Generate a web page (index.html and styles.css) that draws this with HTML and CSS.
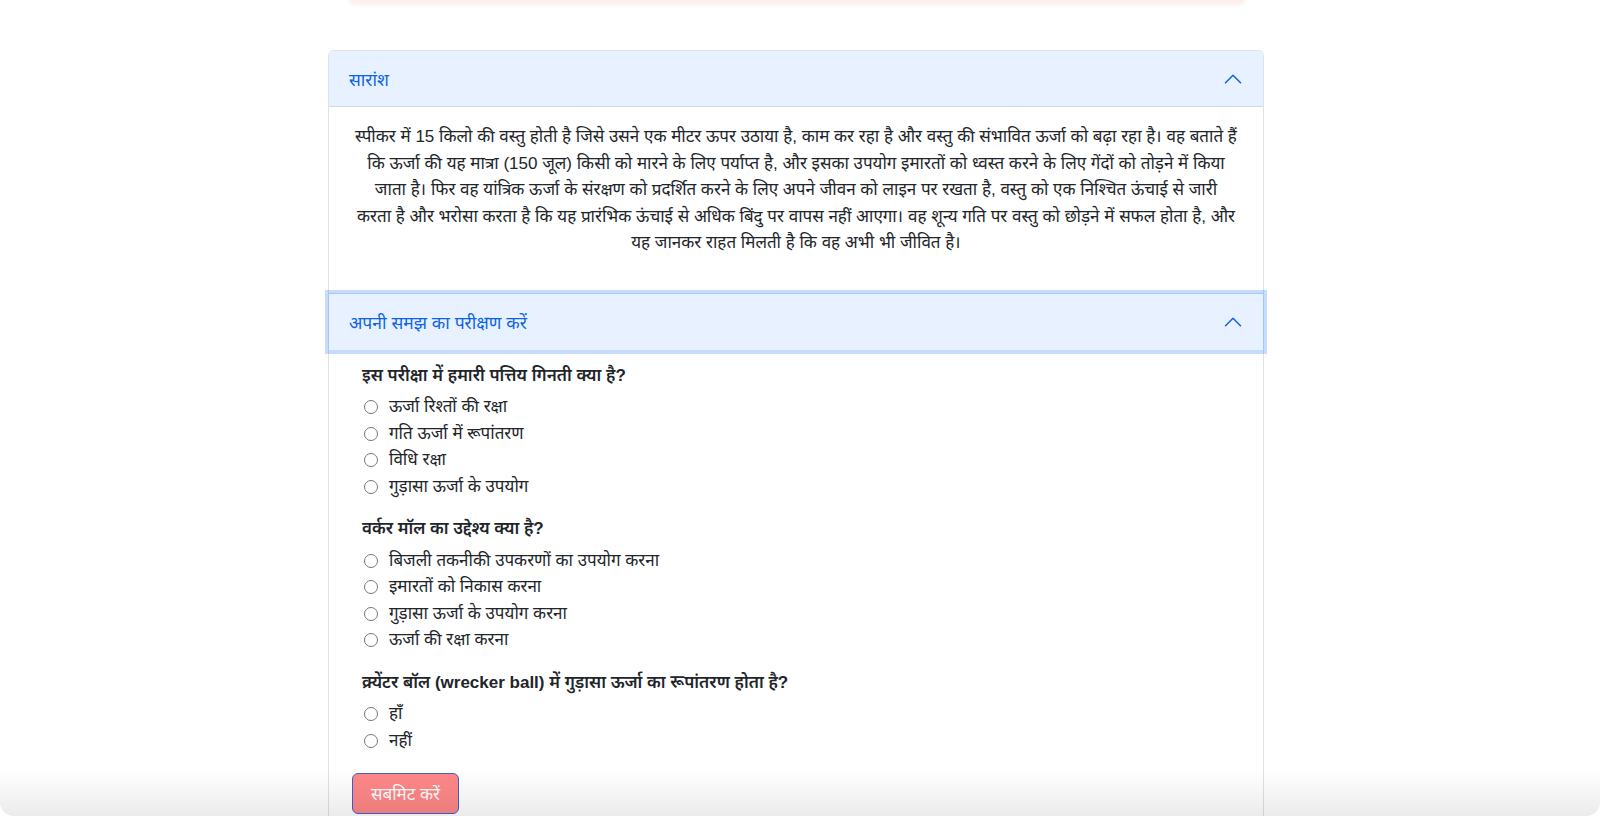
FILE: index.html
```html
<!DOCTYPE html>
<html lang="hi">
<head>
<meta charset="utf-8">
<title>सारांश</title>
<link rel="stylesheet" href="styles.css">
</head>
<body>
<div class="page">
  <div class="alert-strip"></div>
  <div class="accordion">
    <section class="acc-item">
      <button class="acc-header" type="button">
        <span class="acc-title">सारांश</span>
        <svg class="chev" viewBox="0 0 16 16" width="20" height="20"><path d="M2 11L8 5L14 11" fill="none" stroke="#0c63e4" stroke-width="1.2" stroke-linecap="round" stroke-linejoin="round"/></svg>
      </button>
      <div class="acc-body summary">
        <p>स्पीकर में 15 किलो की वस्तु होती है जिसे उसने एक मीटर ऊपर उठाया है, काम कर रहा है और वस्तु की संभावित ऊर्जा को बढ़ा रहा है। वह बताते हैं<br>कि ऊर्जा की यह मात्रा (150 जूल) किसी को मारने के लिए पर्याप्त है, और इसका उपयोग इमारतों को ध्वस्त करने के लिए गेंदों को तोड़ने में किया<br>जाता है। फिर वह यांत्रिक ऊर्जा के संरक्षण को प्रदर्शित करने के लिए अपने जीवन को लाइन पर रखता है, वस्तु को एक निश्चित ऊंचाई से जारी<br>करता है और भरोसा करता है कि यह प्रारंभिक ऊंचाई से अधिक बिंदु पर वापस नहीं आएगा। वह शून्य गति पर वस्तु को छोड़ने में सफल होता है, और<br>यह जानकर राहत मिलती है कि वह अभी भी जीवित है।</p>
      </div>
    </section>
    <section class="acc-item next">
      <button class="acc-header focused" type="button">
        <span class="acc-title">अपनी समझ का परीक्षण करें</span>
        <svg class="chev" viewBox="0 0 16 16" width="20" height="20"><path d="M2 11L8 5L14 11" fill="none" stroke="#0c63e4" stroke-width="1.2" stroke-linecap="round" stroke-linejoin="round"/></svg>
      </button>
      <div class="acc-body quiz">
        <div class="question">
          <p class="q-title">इस परीक्षा में हमारी पत्तिय गिनती क्या है?</p>
          <label class="opt"><input type="radio" name="q1"><span>ऊर्जा रिश्तों की रक्षा</span></label>
          <label class="opt"><input type="radio" name="q1"><span>गति ऊर्जा में रूपांतरण</span></label>
          <label class="opt"><input type="radio" name="q1"><span>विधि रक्षा</span></label>
          <label class="opt"><input type="radio" name="q1"><span>गुड़ासा ऊर्जा के उपयोग</span></label>
        </div>
        <div class="question">
          <p class="q-title">वर्कर मॉल का उद्देश्य क्या है?</p>
          <label class="opt"><input type="radio" name="q2"><span>बिजली तकनीकी उपकरणों का उपयोग करना</span></label>
          <label class="opt"><input type="radio" name="q2"><span>इमारतों को निकास करना</span></label>
          <label class="opt"><input type="radio" name="q2"><span>गुड़ासा ऊर्जा के उपयोग करना</span></label>
          <label class="opt"><input type="radio" name="q2"><span>ऊर्जा की रक्षा करना</span></label>
        </div>
        <div class="question">
          <p class="q-title">क्र्येंटर बॉल (wrecker ball) में गुड़ासा ऊर्जा का रूपांतरण होता है?</p>
          <label class="opt"><input type="radio" name="q3"><span>हाँ</span></label>
          <label class="opt"><input type="radio" name="q3"><span>नहीं</span></label>
        </div>
        <button class="submit" type="button">सबमिट करें</button>
      </div>
    </section>
  </div>
</div>
<div class="bottom-shade"></div>
</body>
</html>
```
FILE: styles.css
```css
html, body {
  margin: 0;
  padding: 0;
  background: #fff;
}
body {
  font-family: "Liberation Sans", "Noto Sans", sans-serif;
  font-size: 17px;
  color: #212529;
}
.page {
  width: 936px;
  margin-left: calc(50% - 472px);
}
.alert-strip {
  height: 44px;
  margin: -40px 18px 46px 20px;
  background: #fff0f0;
  border-radius: 0 0 8px 8px;
  box-shadow: 0 1px 4px rgba(200, 120, 120, 0.12);
}
.accordion {
  border: 1px solid #dee2e6;
  border-bottom: 0;
  border-radius: 6px 6px 0 0;
}
.acc-header {
  display: flex;
  align-items: center;
  justify-content: space-between;
  width: 100%;
  height: 56px;
  padding: 0 20px;
  margin: 0;
  border: 0;
  background: #e7f1ff;
  color: #0c63e4;
  font: inherit;
  font-size: 17.5px;
  text-align: left;
  box-shadow: inset 0 -1px 0 rgba(0, 0, 0, 0.1);
  cursor: pointer;
}
.acc-item:first-child .acc-header {
  border-radius: 5px 5px 0 0;
}
.acc-item.next {
  border-top: 1px solid #dee2e6;
}
.acc-header.focused {
  position: relative;
  box-shadow: 0 0 0 4px rgba(13, 110, 253, 0.24);
}
.chev {
  flex: none;
}
.acc-body {
  padding: 17px 20px 20px;
}
.summary p {
  margin: 0 0 16px;
  text-align: center;
  line-height: 26.5px;
}
.quiz {
  padding: 13px 20px 20px;
}
.question {
  padding-left: 13px;
  margin-bottom: 16px;
}
.q-title {
  margin: 0 0 5px;
  font-weight: 600;
  line-height: 26.5px;
}
.opt {
  display: flex;
  align-items: center;
  line-height: 26.5px;
}
.opt input {
  margin: 0 11px 0 2px;
  width: 14px;
  height: 14px;
}
.submit {
  margin: 3px 0 0 3px;
  width: 107px;
  height: 41px;
  background: #ff8888;
  border: 1px solid #3d5fd9;
  border-radius: 6px;
  color: #fff;
  font: inherit;
  font-size: 17px;
  cursor: pointer;
}
.bottom-shade {
  position: fixed;
  left: 0;
  right: 0;
  bottom: 0;
  height: 46px;
  background: linear-gradient(to bottom, rgba(0, 0, 0, 0), rgba(0, 0, 0, 0.08));
  border-radius: 0 0 14px 14px;
  pointer-events: none;
}
```
